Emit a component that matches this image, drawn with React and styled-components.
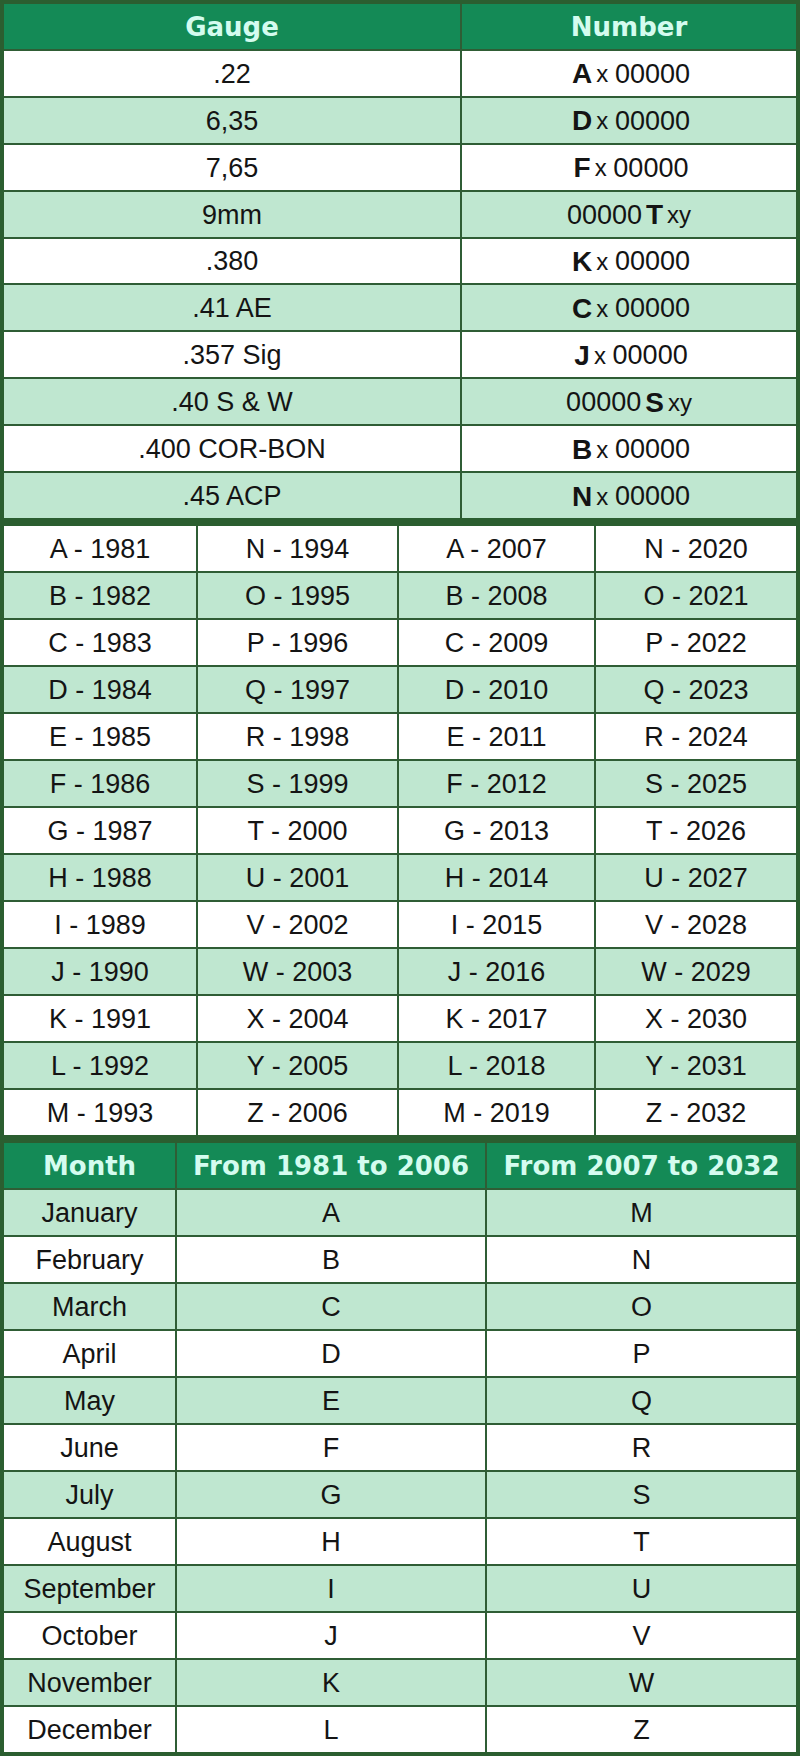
import React from "react";
import styled, { createGlobalStyle } from "styled-components";

const Global = createGlobalStyle`
  html, body { margin: 0; padding: 0; background: #2c5f30; }
  * { box-sizing: border-box; }
`;

const Frame = styled.div`
  width: 800px;
  height: 1756px;
  background: #2b5e30;
  padding: 4px;
  display: flex;
  flex-direction: column;
  gap: 8px;
`;

const Table = styled.div`
  display: grid;
  grid-template-columns: ${(p) => p.$cols};
  grid-template-rows: repeat(${(p) => p.$rows}, 1fr);
  height: ${(p) => p.$h}px;
  gap: 2px;
  background: #2f5d35;
  flex: none;
`;

const Head = styled.div`
  background: #148a56;
  color: #d4fcef;
  font-family: "DejaVu Sans", Verdana, sans-serif;
  font-weight: bold;
  font-size: 26px;
  display: flex;
  align-items: center;
  justify-content: center;
  white-space: nowrap;
  padding-top: 1px;
`;

const Cell = styled.div`
  background: ${(p) => (p.$alt ? "#bfe7d0" : "#ffffff")};
  color: #141414;
  font-family: "Liberation Sans", Arial, sans-serif;
  font-size: 27px;
  display: flex;
  align-items: center;
  justify-content: center;
  white-space: nowrap;
  padding-top: 2px;
`;

const Code = styled.b`
  font-weight: bold;
  font-size: 28px;
  margin: 0 4px;
`;

const Small = styled.span`
  font-size: 24px;
`;

const gauges = [
  [".22", "A", false],
  ["6,35", "D", false],
  ["7,65", "F", false],
  ["9mm", "T", true],
  [".380", "K", false],
  [".41 AE", "C", false],
  [".357 Sig", "J", false],
  [".40 S & W", "S", true],
  [".400 COR-BON", "B", false],
  [".45 ACP", "N", false],
];

const letters = "ABCDEFGHIJKLMNOPQRSTUVWXYZ".split("");
const months = [
  "January", "February", "March", "April", "May", "June",
  "July", "August", "September", "October", "November", "December",
];

export default function App() {
  return (
    <>
      <Global />
      <Frame>
        <Table $cols="456px 1fr" $rows={11} $h={514}>
          <Head>Gauge</Head>
          <Head>Number</Head>
          {gauges.map(([g, l, suffix], i) => (
            <React.Fragment key={g}>
              <Cell $alt={i % 2 === 1}>{g}</Cell>
              <Cell $alt={i % 2 === 1}>
                {suffix ? (
                  <>
                    00000<Code>{l}</Code>
                    <Small>xy</Small>
                  </>
                ) : (
                  <>
                    <Code>{l}</Code>
                    <Small>x&nbsp;</Small>00000
                  </>
                )}
              </Cell>
            </React.Fragment>
          ))}
        </Table>
        <Table $cols="192px 199px 195px 1fr" $rows={13} $h={609}>
          {letters.slice(0, 13).map((l, i) => (
            <React.Fragment key={l}>
              <Cell $alt={i % 2 === 1}>{l} - {1981 + i}</Cell>
              <Cell $alt={i % 2 === 1}>{letters[i + 13]} - {1994 + i}</Cell>
              <Cell $alt={i % 2 === 1}>{l} - {2007 + i}</Cell>
              <Cell $alt={i % 2 === 1}>{letters[i + 13]} - {2020 + i}</Cell>
            </React.Fragment>
          ))}
        </Table>
        <Table $cols="171px 308px 1fr" $rows={13} $h={609}>
          <Head>Month</Head>
          <Head>From 1981 to 2006</Head>
          <Head>From 2007 to 2032</Head>
          {months.map((m, i) => (
            <React.Fragment key={m}>
              <Cell $alt={i % 2 === 0}>{m}</Cell>
              <Cell $alt={i % 2 === 0}>{letters[i]}</Cell>
              <Cell $alt={i % 2 === 0}>{"MNOPQRSTUVWZ"[i]}</Cell>
            </React.Fragment>
          ))}
        </Table>
      </Frame>
    </>
  );
}
